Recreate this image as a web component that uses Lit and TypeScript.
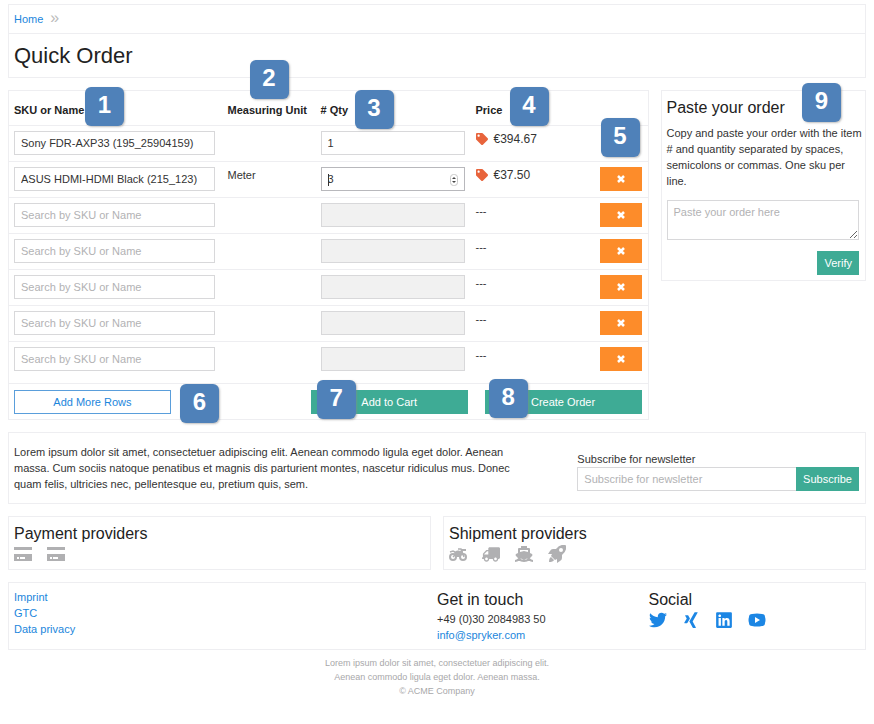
import { LitElement, html, svg, css } from "lit";
import { customElement } from "lit/decorators.js";
import { classMap } from "lit/directives/class-map.js";

interface Row {
  name: string;
  unit?: string;
  qty?: string;
  price?: string;
  focused?: boolean;
  badge?: boolean;
}

const rows: Row[] = [
  { name: "Sony FDR-AXP33 (195_25904159)", qty: "1", price: "€394.67", badge: true },
  { name: "ASUS HDMI-HDMI Black (215_123)", unit: "Meter", qty: "3", price: "€37.50", focused: true },
  { name: "" }, { name: "" }, { name: "" }, { name: "" }, { name: "" },
];

const tag = svg`<path d="M0 252.118V48C0 21.49 21.49 0 48 0h204.118a48 48 0 0 1 33.941 14.059l211.882 211.882c18.745 18.745 18.745 49.137 0 67.882L293.823 497.941c-18.745 18.745-49.137 18.745-67.882 0L14.059 286.059A48 48 0 0 1 0 252.118zM112 64c-26.51 0-48 21.49-48 48s21.49 48 48 48 48-21.49 48-48-21.49-48-48-48z"/>`;
const truck = svg`<path transform="matrix(-1 0 0 1 640 0)" d="M48 0C21.500 0 0 21.500 0 48v320c0 26.500 21.500 48 48 48h16c0 53 43 96 96 96s96-43 96-96h128c0 53 43 96 96 96s96-43 96-96h48c8.800 0 16-7.200 16-16v-32c0-8.800-7.200-16-16-16h-16V243.900c0-12.700-5.100-24.900-14.100-33.900L494 110.100c-9-9-21.200-14.100-33.900-14.100H416V48c0-26.500-21.500-48-48-48zM160 464c-26.500 0-48-21.500-48-48s21.500-48 48-48 48 21.500 48 48-21.500 48-48 48zm320 0c-26.500 0-48-21.500-48-48s21.500-48 48-48 48 21.500 48 48-21.500 48-48 48zm80-208H416V144h44.100l99.900 99.900V256z"/>`;
const card = svg`<path fill-rule="evenodd" d="M0 2h18v3H0zM0 9h18v7H0zM3 12v2h2v-2zM6 12v2h5v-2z"/>`;
const motorcycle = svg`<g fill="none" stroke="currentColor"><circle cx="4" cy="12" r="3" stroke-width="2"/><circle cx="14" cy="12" r="3" stroke-width="2"/><path d="M9 4h3l3 8M4 12l4-4 4-1M1 7l3-1 2 1" stroke-width="1.500"/></g><path d="M5 8c1-2 3-3 6-2l2-1 1 2-3 5H7zM12 4l5 0v2h-4z"/>`;
const ship = svg`<path d="M6 1h6v2h2q1 0 1 1v4l2 1q1 1 0 2l-3 3h-1q-1-1-2 0-2 2-4 0-1-1-2 0H4L1 11q-1-1 0-2l2-1V4q0-1 1-1h2zM5 5v2l4-1 4 1V5z" fill-rule="evenodd"/><path d="M0 16q2 0 4-2 2 2 5 2t5-2q2 2 4 2" fill="none" stroke="currentColor" stroke-width="2"/>`;
const rocket = svg`<path fill-rule="evenodd" d="M17 0q-5-1-9 4H5Q3 4 2 6L0 9h4l-1 2 4 4 2-1v4l3-2q2-1 2-3v-3q5-4 4-9 0-1-1-1zM13 3a2 2 0 1 1 0 4 2 2 0 0 1 0-4zM3 12q-2 1-2 5 4 0 5-2z"/>`;
const twitter = svg`<path d="M459.370 151.716c.325 4.548.325 9.097.325 13.645 0 138.720-105.583 298.558-298.558 298.558-59.452 0-114.680-17.219-161.137-47.106 8.447.974 16.568 1.299 25.340 1.299 49.055 0 94.213-16.568 130.274-44.832-46.132-.975-84.792-31.188-98.112-72.772 6.498.974 12.995 1.624 19.818 1.624 9.421 0 18.843-1.300 27.614-3.573-48.081-9.747-84.143-51.980-84.143-102.985v-1.299c13.969 7.797 30.214 12.670 47.431 13.319-28.264-18.843-46.781-51.005-46.781-87.391 0-19.492 5.197-37.360 14.294-52.954 51.655 63.675 129.300 105.258 216.365 109.807-1.624-7.797-2.599-15.918-2.599-24.040 0-57.828 46.782-104.934 104.934-104.934 30.213 0 57.502 12.670 76.670 33.137 23.715-4.548 46.456-13.320 66.599-25.340-7.798 24.366-24.366 44.833-46.132 57.827 21.117-2.273 41.584-8.122 60.426-16.243-14.292 20.791-32.161 39.308-52.628 54.253z"/>`;
const xing = svg`<path d="M162.700 210c-1.800 3.300-25.200 44.400-70.100 123.500-4.900 8.300-10.800 12.500-17.700 12.500H9.800c-7.700 0-12.100-7.500-8.500-14.400l69-121.300c.2 0 .2-.1 0-.3l-43.900-75.600c-4.300-7.800.3-14.100 8.500-14.100H100c7.300 0 13.300 4.100 18 12.200l44.700 77.500zM382.600 46.100l-144 253v.3L330.200 466c3.900 7.100.2 14.100-8.500 14.100h-65.200c-7.600 0-13.600-4-18-12.200l-92.400-168.500c3.300-5.800 51.500-90.800 144.800-255.200 4.600-8.100 10.400-12.200 17.500-12.200h65.700c8 0 12.300 6.700 8.500 14.100z"/>`;
const linkedin = svg`<path d="M416 32H31.900C14.300 32 0 46.500 0 64.300v383.400C0 465.500 14.300 480 31.900 480H416c17.600 0 32-14.500 32-32.300V64.300c0-17.800-14.400-32.300-32-32.300zM135.400 416H69V202.200h66.500V416zm-33.200-243c-21.300 0-38.500-17.300-38.500-38.500S80.900 96 102.200 96c21.200 0 38.500 17.300 38.500 38.500 0 21.300-17.200 38.500-38.500 38.500zm282.100 243h-66.400V312c0-24.800-.5-56.700-34.500-56.700-34.600 0-39.900 27-39.900 54.900V416h-66.400V202.200h63.700v29.200h.9c8.900-16.800 30.600-34.500 62.900-34.500 67.200 0 79.700 44.300 79.700 101.900V416z"/>`;
const youtube = svg`<path fill-rule="evenodd" d="M4 3q5-1 10 0 3 0 3 3 1 3 0 6 0 3-3 3-5 1-10 0-3 0-3-3-1-3 0-6 0-3 3-3zM7 6v6l5-3z"/>`;

const icon = (box: string, shape: unknown, kind = "icon") =>
  html`<svg class=${kind} viewBox=${box} aria-hidden="true" fill="currentColor">${shape}</svg>`;

@customElement("app-root")
export class AppRoot extends LitElement {
  static styles = css`
    :host {
      display: block;
      font: 11px/16px "Liberation Sans", Arial, sans-serif;
      color: #333;
      background: #fff;
      padding: 4px 8px 24px;
    }
    * { box-sizing: border-box; }
    h1, h2, p, ul { margin: 0; padding: 0; font-weight: 400; }
    h1 { font-size: 22px; line-height: 43px; padding: 0 5px; color: #222; }
    h2 { font-size: 16px; line-height: 22px; color: #222; }
    a { color: #1c86dc; text-decoration: none; }
    ul { list-style: none; }
    input, textarea, button { font: inherit; margin: 0; border-radius: 0; }
    input, textarea {
      display: block;
      width: 100%;
      color: #333;
      background: #fff;
      border: 1px solid #d8d8da;
      padding: 0 6px;
      outline: none;
    }
    input { height: 24px; }
    input[type="number"] { appearance: textfield; }
    input::-webkit-inner-spin-button { display: none; }
    input:disabled { background: #f1f1f1; }
    .focused input { border-color: #b8b8bc; }
    ::placeholder { color: #b2b2b4; }
    textarea { height: 40px; padding: 3px 6px; resize: vertical; }
    button { height: 24px; border: 0; padding: 0 7px; color: #fff; background: #3eab95; }
    .panel { border: 1px solid #eeeef1; position: relative; }
    .head { border: 1px solid #eeeef1; }
    .crumbs { display: flex; gap: 7px; height: 29px; padding: 0 5px; line-height: 28px; border-bottom: 1px solid #eeeef1; }
    .crumbs span { color: #bbb; font-size: 16px; line-height: 26px; }
    .grid { display: grid; grid-template-columns: repeat(12, 1fr); gap: 12px; align-items: start; margin-top: 12px; }
    .nine { grid-column: span 9; }
    .three { grid-column: span 3; }
    .six { grid-column: span 6; }
    table { width: 100%; border-collapse: collapse; table-layout: fixed; }
    th { height: 34px; padding: 5px 0 0 5px; text-align: left; color: #222; position: relative; }
    td { height: 36px; padding: 5px 6px 6px 5px; border-top: 1px solid #eeeef1; vertical-align: top; position: relative; }
    td:first-child { padding-right: 8px; }
    .unit { width: 93px; }
    .qty { width: 155px; }
    .price { width: 124px; }
    .act { width: 53px; }
    .cost { display: flex; align-items: center; gap: 6px; font-size: 12px; }
    .tag { width: 12px; height: 12px; color: #e8643c; }
    .remove { display: block; width: 100%; background: #fd8c2a; }
    .cross { display: block; width: 8px; height: 8px; margin: 0 auto; }
    .stepper { position: absolute; right: 13px; top: 12px; width: 8px; height: 12px; }
    .caret { position: absolute; left: 12px; top: 12px; width: 1px; height: 12px; background: #333; }
    .actions { display: flex; gap: 17px; border-top: 1px solid #eeeef1; margin-top: 6px; padding: 6px 6px 5px 5px; }
    .action { width: 25%; position: relative; }
    .action button { width: 100%; }
    .first { margin-right: auto; }
    .first button { color: #1c86dc; background: #fff; border: 1px solid #5a9edb; }
    .paste { padding: 6px 6px 5px 5px; }
    .paste p { margin: 6px -6px 11px 0; }
    .send { display: flex; justify-content: flex-end; margin-top: 11px; }
    .news { display: grid; grid-template-columns: 2fr 1fr; align-items: center; margin-top: 12px; padding: 11px 6px 11px 5px; }
    .news p { padding-right: 40px; }
    .signup { padding-top: 6px; }
    .field { display: flex; }
    .field input { border-right: 0; flex: 1; min-width: 0; }
    .provider { padding: 6px 5px; }
    .icons { display: flex; gap: 15px; align-items: center; color: #b0b0b2; }
    .icon { display: block; width: 18px; height: 18px; }
    .footer { display: grid; grid-template-columns: 2fr 1fr 1fr; margin-top: 12px; padding: 6px 5px; min-height: 68px; }
    .social { color: #1c86e4; }
    .legal { margin-top: 6px; text-align: center; font-size: 9px; line-height: 14px; color: #a8a8aa; }
    .badge {
      position: absolute;
      z-index: 1;
      width: 39px;
      height: 39px;
      border-radius: 6px;
      background: #4f81b9;
      box-shadow: 1px 1px 2px #8888;
      color: #fff;
      font: bold 24px/36px "Liberation Sans", Arial, sans-serif;
      text-align: center;
    }
    .b1 { left: 76px; top: -4px; }
    .b2 { left: 27px; top: -31px; }
    .b3 { left: 39px; top: -1px; }
    .b4 { left: 39px; top: -4px; }
    .b5 { left: 6px; top: -8px; }
    .b6 { left: 166px; top: -6px; }
    .b7 { left: 6px; top: -10px; }
    .b8 { left: 4px; top: -11px; }
    .b9 { right: 24px; top: -8px; }
  `;

  private row(r: Row) {
    return html`<tr>
      <td><input type="text" aria-label="SKU or Name" placeholder="Search by SKU or Name" .value=${r.name} /></td>
      <td>${r.unit ?? ""}</td>
      <td class=${classMap({ focused: !!r.focused })}>
        <input type="number" aria-label="Quantity" .value=${r.qty ?? ""} ?disabled=${!r.qty} />
        ${r.focused
          ? html`<span class="caret"></span>
              <svg class="stepper" viewBox="0 0 8 12" aria-hidden="true">
                <rect x=".5" y=".5" width="7" height="11" rx="3" fill="#fff" stroke="#c8c8c8" />
                <path d="M2 5l2-2 2 2zM2 7l2 2 2-2z" fill="#444" />
              </svg>`
          : ""}
      </td>
      <td>${r.price ? html`<span class="cost">${icon("0 0 512 512", tag, "tag")}${r.price}</span>` : "---"}</td>
      <td>
        ${r.badge
          ? html`<span class="badge b5">5</span>`
          : html`<button class="remove" type="button" aria-label="Remove row">
              <svg class="cross" viewBox="0 0 8 8" aria-hidden="true"><path d="M1 1l6 6M7 1L1 7" stroke="#fff" stroke-width="2.500" /></svg>
            </button>`}
      </td>
    </tr>`;
  }

  render() {
    return html`
      <header class="head">
        <nav class="crumbs" aria-label="Breadcrumb"><a href="#home">Home</a><span>»</span></nav>
        <h1>Quick Order</h1>
      </header>
      <main class="grid">
        <form class="panel nine">
          <table>
            <thead>
              <tr>
                <th>SKU or Name<span class="badge b1">1</span></th>
                <th class="unit">Measuring Unit<span class="badge b2">2</span></th>
                <th class="qty"># Qty<span class="badge b3">3</span></th>
                <th class="price">Price<span class="badge b4">4</span></th>
                <th class="act"></th>
              </tr>
            </thead>
            <tbody>${rows.map((r) => this.row(r))}</tbody>
          </table>
          <div class="actions">
            <div class="action first"><button type="button">Add More Rows</button><span class="badge b6">6</span></div>
            <div class="action"><button type="button">Add to Cart</button><span class="badge b7">7</span></div>
            <div class="action"><button type="button">Create Order</button><span class="badge b8">8</span></div>
          </div>
        </form>
        <form class="panel paste three">
          <h2>Paste your order</h2>
          <span class="badge b9">9</span>
          <p>Copy and paste your order with the item # and quantity separated by spaces, semicolons or commas. One sku per line.</p>
          <textarea aria-label="Order items" placeholder="Paste your order here"></textarea>
          <div class="send"><button type="button">Verify</button></div>
        </form>
      </main>
      <section class="panel news">
        <p>Lorem ipsum dolor sit amet, consectetuer adipiscing elit. Aenean commodo ligula eget dolor. Aenean massa. Cum sociis natoque penatibus et magnis dis parturient montes, nascetur ridiculus mus. Donec quam felis, ultricies nec, pellentesque eu, pretium quis, sem.</p>
        <form class="signup">
          <label for="email">Subscribe for newsletter</label>
          <div class="field"><input id="email" type="email" placeholder="Subscribe for newsletter" /><button type="button">Subscribe</button></div>
        </form>
      </section>
      <div class="grid">
        <section class="panel provider six">
          <h2>Payment providers</h2>
          <div class="icons">${icon("0 0 18 18", card)}${icon("0 0 18 18", card)}</div>
        </section>
        <section class="panel provider six">
          <h2>Shipment providers</h2>
          <div class="icons">
            ${icon("0 0 18 18", motorcycle)}${icon("0 -40 640 560", truck)}${icon("0 0 18 18", ship)}${icon("0 0 18 18", rocket)}
          </div>
        </section>
      </div>
      <footer>
        <div class="panel footer">
          <ul>
            <li><a href="#imprint">Imprint</a></li>
            <li><a href="#gtc">GTC</a></li>
            <li><a href="#privacy">Data privacy</a></li>
          </ul>
          <div>
            <h2>Get in touch</h2>
            <p>+49 (0)30 2084983 50</p>
            <a href="mailto:info@spryker.com">info@spryker.com</a>
          </div>
          <div>
            <h2>Social</h2>
            <div class="icons social">
              ${icon("0 0 512 512", twitter)}${icon("0 0 384 512", xing)}${icon("0 0 448 512", linkedin)}${icon("0 0 18 18", youtube)}
            </div>
          </div>
        </div>
        <p class="legal">Lorem ipsum dolor sit amet, consectetuer adipiscing elit.<br />Aenean commodo ligula eget dolor. Aenean massa.<br />© ACME Company</p>
      </footer>
    `;
  }
}
